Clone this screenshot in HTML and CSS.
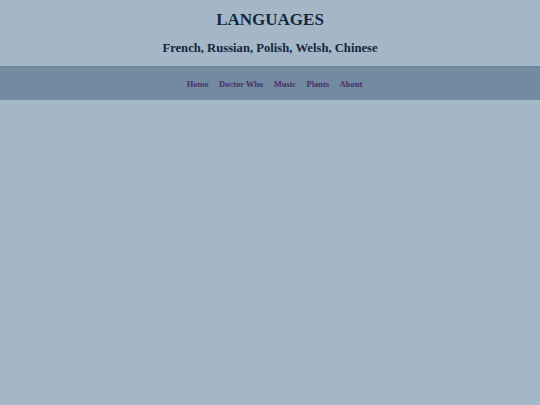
FILE: index.html
```html
<!DOCTYPE html>
<html>
<head>
<meta charset="utf-8">
<link rel="stylesheet" href="styles.css">
</head>
<body>
<header class="header">
  <h1 class="title">LANGUAGES</h1>
  <h2 class="subtitle">French, Russian, Polish, Welsh, Chinese</h2>
</header>
<nav class="nav">
  <a class="nav-link" href="#">Home</a>
  <a class="nav-link" href="#">Doctor Who</a>
  <a class="nav-link" href="#">Music</a>
  <a class="nav-link" href="#">Plants</a>
  <a class="nav-link" href="#">About</a>
</nav>
</body>
</html>
```
FILE: styles.css
```css
html, body {
  margin: 0;
  padding: 0;
  background: #a3b7c6;
  font-family: "Liberation Serif", "Times New Roman", serif;
}
.header {
  text-align: center;
  color: #14273f;
  padding-top: 10px;
  height: 56px;
}
.title {
  margin: 0;
  font-size: 17px;
  font-weight: bold;
  line-height: 20px;
}
.subtitle {
  margin: 10px 0 0 0;
  font-size: 12.65px;
  font-weight: bold;
  line-height: 16px;
}
.nav {
  background: #728ba0;
  border-top: 1px solid #6a8398;
  height: 33px;
  padding-left: 9px;
  display: flex;
  justify-content: center;
  align-items: center;
  gap: 10.5px;
}
.nav-link {
  color: #4a2d6c;
  font-size: 8.5px;
  font-weight: bold;
  text-decoration: none;
}
```
